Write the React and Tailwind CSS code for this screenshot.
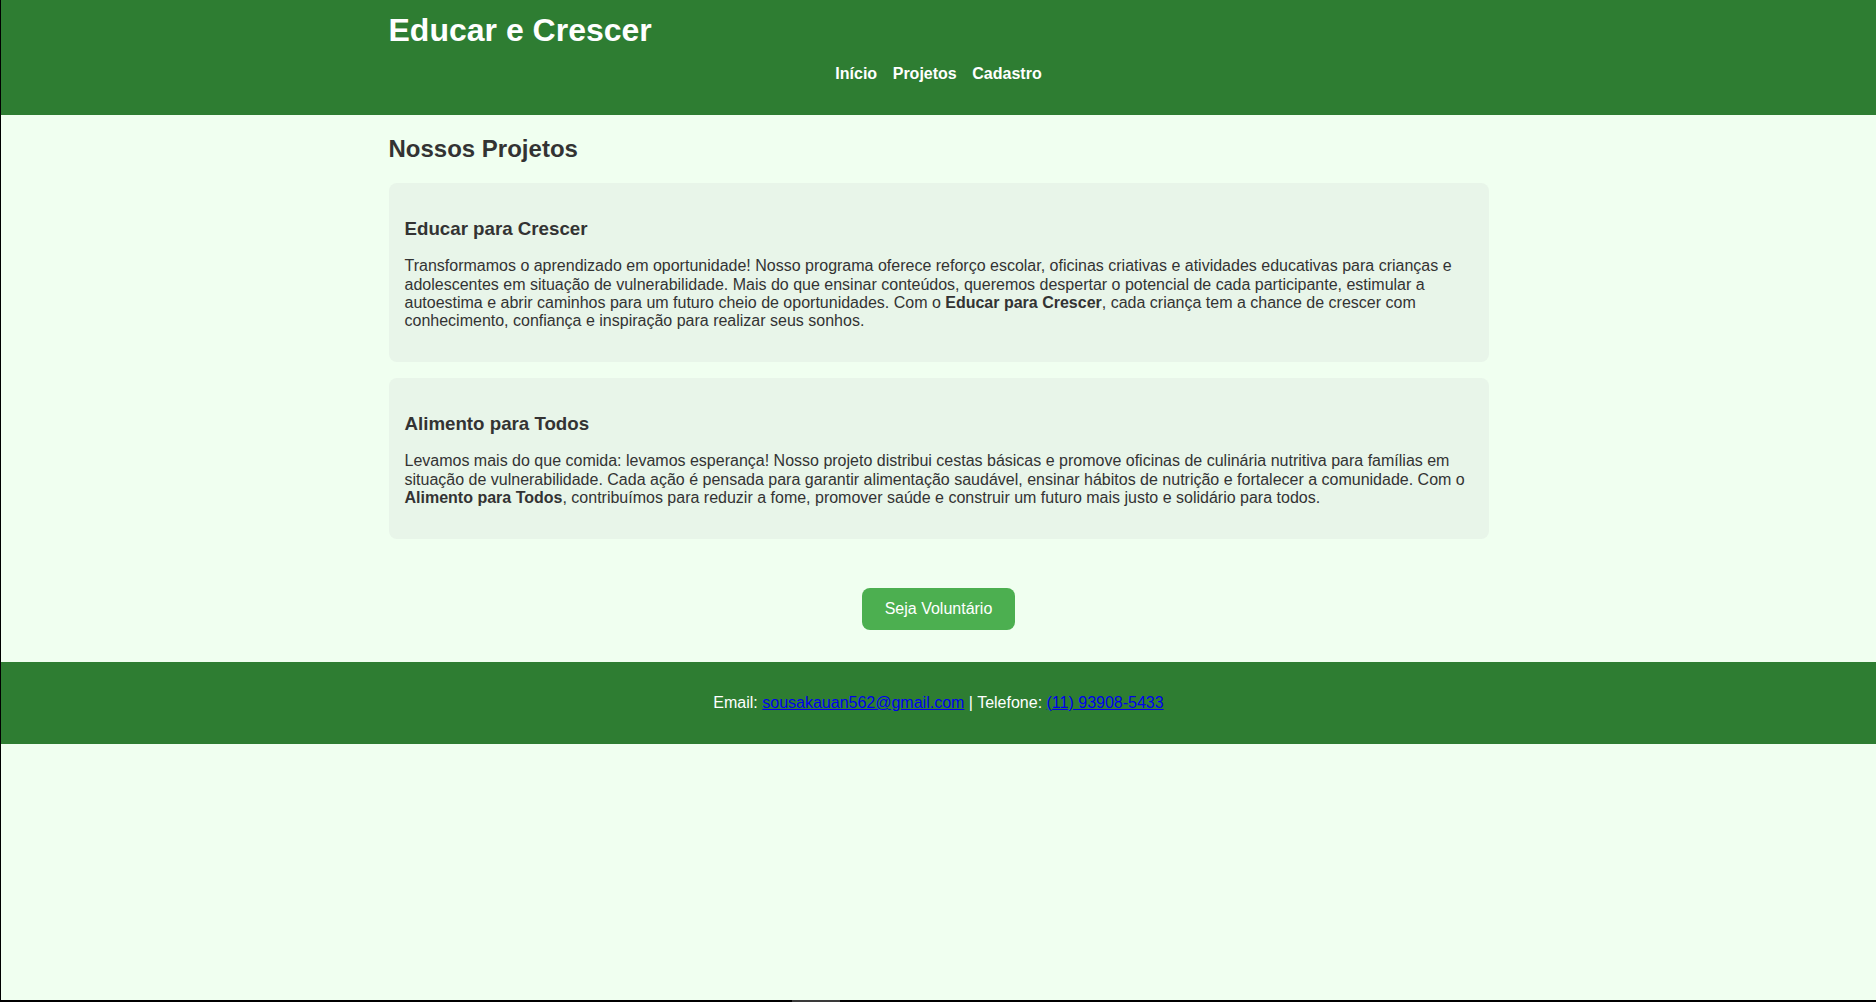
export default function App() {
  const font = { fontFamily: '"Liberation Sans", Arial, Helvetica, sans-serif' };
  return (
    <div
      className="relative flex min-h-[1002px] flex-col border-b-2 border-l border-black bg-[#f0fff0] text-[#333333]"
      style={font}
    >
      <header className="bg-[#2e7d32] pt-3 pb-8 text-white">
        <div className="mx-auto w-[1100px]">
          <h1 className="mb-4 text-[32px] font-bold leading-[36.8px]">Educar e Crescer</h1>
          <nav className="flex justify-center gap-[15.6px] text-[16px] font-bold leading-[18.4px]">
            <a href="#">Início</a>
            <a href="#">Projetos</a>
            <a href="#">Cadastro</a>
          </nav>
        </div>
      </header>

      <main className="mx-auto w-[1100px] pt-5 pb-8">
        <h2 className="mb-[19.9px] text-[24px] font-bold leading-[27.6px]">Nossos Projetos</h2>

        <section className="mb-4 rounded-lg bg-[#e8f5e9] px-4 pt-4 pb-[31px]">
          <h3 className="mt-[19px] mb-[18px] text-[18.72px] font-bold leading-[21.5px]">Educar para Crescer</h3>
          <p className="text-[16px] leading-[18.4px]">
            Transformamos o aprendizado em oportunidade! Nosso programa oferece reforço escolar, oficinas criativas e
            atividades educativas para crianças e adolescentes em situação de vulnerabilidade. Mais do que ensinar
            conteúdos, queremos despertar o potencial de cada participante, estimular a autoestima e abrir caminhos para
            um futuro cheio de oportunidades. Com o <strong className="font-bold">Educar para Crescer</strong>, cada criança
            tem a chance de crescer com conhecimento, confiança e inspiração para realizar seus sonhos.
          </p>
        </section>

        <section className="rounded-lg bg-[#e8f5e9] px-4 pt-4 pb-[31px]">
          <h3 className="mt-[19px] mb-[18px] text-[18.72px] font-bold leading-[21.5px]">Alimento para Todos</h3>
          <p className="text-[16px] leading-[18.4px]">
            Levamos mais do que comida: levamos esperança! Nosso projeto distribui cestas básicas e promove oficinas de
            culinária nutritiva para famílias em situação de vulnerabilidade. Cada ação é pensada para garantir
            alimentação saudável, ensinar hábitos de nutrição e fortalecer a comunidade. Com o{" "}
            <strong className="font-bold">Alimento para Todos</strong>, contribuímos para reduzir a fome, promover saúde e
            construir um futuro mais justo e solidário para todos.
          </p>
        </section>

        <div className="mt-[49px] flex justify-center">
          <button className="rounded-lg bg-[#4caf50] px-[23px] py-3 text-[16px] leading-[18.4px] text-white">
            Seja Voluntário
          </button>
        </div>
      </main>

      <footer className="bg-[#2e7d32] py-8 text-center text-[16px] leading-[18.4px] text-white">
        <p>
          Email:{" "}
          <a href="#" className="text-[#0000ee] underline">
            sousakauan562@gmail.com
          </a>{" "}
          | Telefone:{" "}
          <a href="#" className="text-[#0000ee] underline">
            (11) 93908-5433
          </a>
        </p>
      </footer>

      <div className="absolute bottom-[-2px] left-[791px] h-[2px] w-[48px] bg-[#3a3a3a]" />
    </div>
  );
}
